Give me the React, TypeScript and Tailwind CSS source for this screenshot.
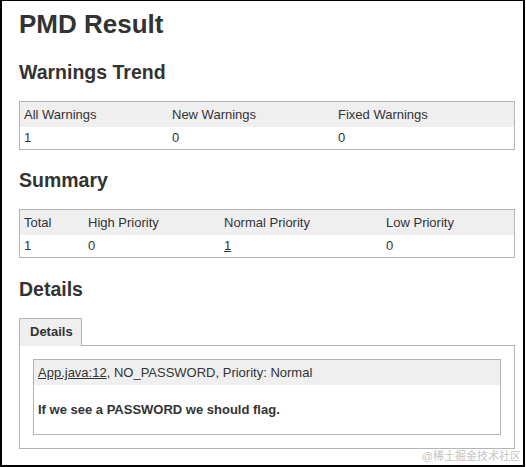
import React from "react";

const font = { fontFamily: '"Liberation Sans", Arial, sans-serif' };

function Table({ cols, head, body }: { cols: string; head: string[]; body: React.ReactNode[] }) {
  return (
    <div className="w-[496px] border border-[#b4b4b4] text-[13px] text-[#333]">
      <div className={`grid ${cols} bg-[#efefef] h-[25px] leading-[25px]`}>
        {head.map((h, i) => (
          <div key={i} className="pl-[4px] whitespace-nowrap">{h}</div>
        ))}
      </div>
      <div className={`grid ${cols} h-[22px] leading-[22px] bg-white`}>
        {body.map((b, i) => (
          <div key={i} className="pl-[4px]">{b}</div>
        ))}
      </div>
    </div>
  );
}

export default function App() {
  return (
    <div
      className="relative w-[525px] h-[467px] bg-white border-black border-l-2 border-t border-r-2 border-b-2 pl-[17px] pt-[8px] text-[#333] overflow-hidden"
      style={font}
    >
      <h1 className="text-[26px] font-bold leading-[30px] text-[#333]">PMD Result</h1>
      <h2 className="mt-[21px] text-[19.5px] font-bold leading-[24px]">Warnings Trend</h2>
      <div className="mt-[17px]">
        <Table
          cols="grid-cols-[148px_166px_180px]"
          head={["All Warnings", "New Warnings", "Fixed Warnings"]}
          body={["1", "0", "0"]}
        />
      </div>
      <h2 className="mt-[18px] text-[19.5px] font-bold leading-[24px]">Summary</h2>
      <div className="mt-[17px]">
        <Table
          cols="grid-cols-[64px_136px_162px_132px]"
          head={["Total", "High Priority", "Normal Priority", "Low Priority"]}
          body={["1", "0", <span className="underline">1</span>, "0"]}
        />
      </div>
      <h2 className="mt-[19px] text-[19.5px] font-bold leading-[24px]">Details</h2>
      <div className="mt-[17px] w-[496px]">
        <div className="relative z-10 -mb-px w-[63px] h-[28px] border-l border-t border-r border-[#b4b4b4] bg-[#efefef] pl-[10px] text-[13px] font-bold leading-[26px]">
          Details
        </div>
        <div className="border border-[#b4b4b4] p-[13px] bg-white">
          <div className="w-[468px] border border-[#b4b4b4] text-[13px]">
            <div className="h-[25px] leading-[25px] bg-[#efefef] pl-[4px]">
              <span className="underline">App.java:12</span>, NO_PASSWORD, Priority: Normal
            </div>
            <div className="py-[17px] leading-[15px] pl-[4px] font-bold">
              If we see a PASSWORD we should flag.
            </div>
          </div>
        </div>
      </div>
      <div
        className="absolute right-[2px] bottom-[2px] text-[11px] leading-[14px] text-[#c4c4c4]"
        style={{ fontFamily: '"Liberation Sans", "Noto Sans CJK SC", sans-serif' }}
      >
        @稀土掘金技术社区
      </div>
    </div>
  );
}
